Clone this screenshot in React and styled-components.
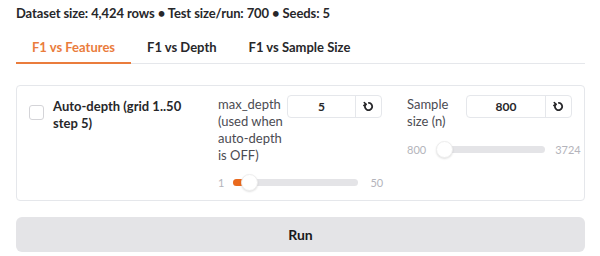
import React, { useState } from 'react';
import styled, { createGlobalStyle } from 'styled-components';

const GlobalStyle = createGlobalStyle`
  body {
    margin: 0;
    background: #fff;
    font-family: Lato, "Open Sans", sans-serif;
    color: #27272a;
  }
  * { box-sizing: border-box; }
`;

const Page = styled.div`
  width: 600px;
  padding: 4px 15px 0 16px;
`;

const Summary = styled.div`
  font-size: 13px;
  font-weight: 700;
  line-height: 18px;
  letter-spacing: -0.1px;
  color: #27272a;
`;

const TabBar = styled.div`
  display: flex;
  margin-top: 9px;
  border-bottom: 1px solid #e5e7eb;
`;

const Tab = styled.button`
  border: 0;
  background: none;
  font-family: inherit;
  font-size: 13px;
  font-weight: 700;
  padding: 0 16px;
  height: 33px;
  margin-bottom: -1px;
  cursor: pointer;
  color: ${(p) => (p.active ? '#ea7c3c' : '#27272a')};
  border-bottom: 2px solid ${(p) => (p.active ? '#ea7c3c' : 'transparent')};
`;

const Panel = styled.div`
  margin-top: 21px;
  border: 1px solid #e5e7eb;
  border-radius: 4px;
  height: 116px;
  display: grid;
  grid-template-columns: 189px 189px 1fr;
  padding: 10px 12px 0 12px;
`;

const CheckRow = styled.label`
  display: flex;
  gap: 9px;
  padding-top: 2px;
`;

const Box = styled.span`
  flex: none;
  width: 15px;
  height: 15px;
  margin-top: 7px;
  border: 1px solid #d4d4d8;
  border-radius: 3px;
  background: #fff;
`;

const CheckText = styled.span`
  font-size: 13px;
  font-weight: 700;
  line-height: 17px;
  color: #27272a;
`;

const Field = styled.div`
  display: flex;
  flex-direction: column;
`;

const FieldTop = styled.div`
  display: flex;
  gap: 3px;
  align-items: flex-start;
`;

const FieldLabel = styled.div`
  width: ${(p) => p.w}px;
  font-size: 13px;
  line-height: 17px;
  color: #4b4b52;
`;

const NumberBox = styled.div`
  display: flex;
  width: ${(p) => p.w}px;
  height: 23px;
  margin-top: -1px;
  border: 1px solid #e5e7eb;
  border-radius: 4px;
  overflow: hidden;
`;

const NumberValue = styled.div`
  flex: 1;
  display: flex;
  align-items: center;
  justify-content: center;
  font-size: 12px;
  font-weight: 700;
  color: #27272a;
`;

const ResetBtn = styled.div`
  width: 26px;
  border-left: 1px solid #e5e7eb;
  display: flex;
  align-items: center;
  justify-content: center;
  color: #27272a;
`;

const SliderRow = styled.div`
  display: flex;
  align-items: center;
  margin-top: ${(p) => p.mt}px;
  font-size: 11px;
  color: #b4b4bb;
`;

const SliderEnd = styled.span`
  margin-left: ${(p) => p.ml || 0}px;
  margin-right: ${(p) => p.mr || 0}px;
`;

const Track = styled.div`
  position: relative;
  width: ${(p) => p.w}px;
  height: 7px;
  border-radius: 4px;
  background: #e4e4e7;
`;

const Fill = styled.div`
  position: absolute;
  left: 0;
  top: 0;
  bottom: 0;
  border-radius: 4px;
  background: #ea6a1e;
`;

const Thumb = styled.div`
  position: absolute;
  top: 50%;
  width: 17px;
  height: 17px;
  margin: -8.5px 0 0 -8.5px;
  border-radius: 50%;
  background: #fff;
  border: 1px solid #eeeeee;
  box-shadow: 0 1px 2px rgba(0, 0, 0, 0.12);
`;

const RunButton = styled.button`
  display: block;
  width: 569px;
  height: 35px;
  margin-top: 16px;
  border: 0;
  border-radius: 6px;
  background: #e4e4e7;
  font-family: inherit;
  font-size: 14px;
  font-weight: 700;
  color: #18181b;
`;

const ResetIcon = () => (
  <svg width="11" height="11" viewBox="0 0 12 12" fill="none">
    <path d="M3 3.4A4 4 0 1 0 6.4 2" stroke="currentColor" strokeWidth="2" strokeLinecap="round" />
    <path d="M1.4 1.6 L3.4 3.8 L0.9 4.8" stroke="currentColor" strokeWidth="1.7" fill="none" strokeLinejoin="round" strokeLinecap="round" />
  </svg>
);

const Slider = ({ min, max, value, w, gapL, gapR, mt, fill }) => {
  const pct = (value - min) / (max - min);
  const thumbLeft = 7 + pct * (w - 14);
  return (
    <SliderRow mt={mt}>
      <SliderEnd mr={gapL}>{min}</SliderEnd>
      <Track w={w}>
        {fill && <Fill style={{ width: thumbLeft }} />}
        <Thumb style={{ left: thumbLeft }} />
      </Track>
      <SliderEnd ml={gapR}>{max}</SliderEnd>
    </SliderRow>
  );
};

export default function App() {
  const [tab, setTab] = useState(0);
  const tabs = ['F1 vs Features', 'F1 vs Depth', 'F1 vs Sample Size'];
  return (
    <Page>
      <GlobalStyle />
      <Summary>Dataset size: 4,424 rows • Test size/run: 700 • Seeds: 5</Summary>
      <TabBar>
        {tabs.map((t, i) => (
          <Tab key={t} active={i === tab} onClick={() => setTab(i)}>
            {t}
          </Tab>
        ))}
      </TabBar>
      <Panel>
        <CheckRow>
          <Box />
          <CheckText>
            Auto-depth (grid 1..50
            <br />
            step 5)
          </CheckText>
        </CheckRow>
        <Field>
          <FieldTop>
            <FieldLabel w={66}>max_depth (used when auto-depth is OFF)</FieldLabel>
            <NumberBox w={95}>
              <NumberValue>5</NumberValue>
              <ResetBtn>
                <ResetIcon />
              </ResetBtn>
            </NumberBox>
          </FieldTop>
          <Slider min={1} max={50} value={5} w={125} gapL={9} gapR={12} mt={12} fill />
        </Field>
        <Field>
          <FieldTop>
            <FieldLabel w={56}>Sample size (n)</FieldLabel>
            <NumberBox w={106}>
              <NumberValue>800</NumberValue>
              <ResetBtn>
                <ResetIcon />
              </ResetBtn>
            </NumberBox>
          </FieldTop>
          <Slider min={800} max={3724} value={800} w={108} gapL={11} gapR={10} mt={13} />
        </Field>
      </Panel>
      <RunButton>Run</RunButton>
    </Page>
  );
}
